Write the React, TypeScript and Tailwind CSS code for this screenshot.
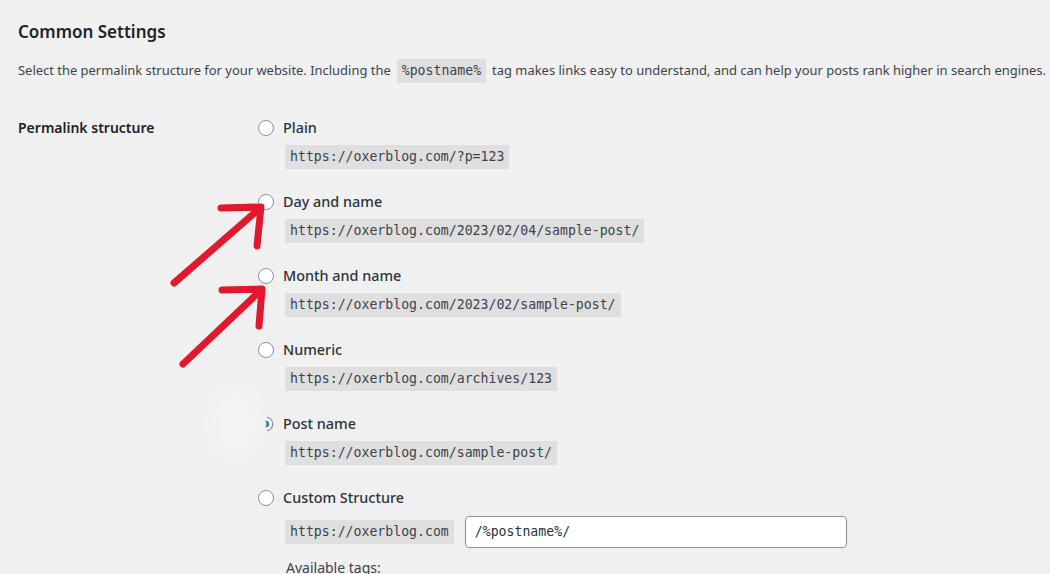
import React from "react";

const sans = "font-['Noto_Sans','Open_Sans',sans-serif]";
const mono = "font-['DejaVu_Sans_Mono','Liberation_Mono',monospace]";

interface OptionProps {
  label: string;
  url: string;
  checked?: boolean;
}

const Radio = () => (
  <span className="block h-4 w-4 shrink-0 rounded-full border border-[#8c8f94] bg-white" />
);

// checked radio, partly rubbed out on its left side
const FadedRadio = () => (
  <svg width="16" height="16" viewBox="0 0 16 16" className="shrink-0">
    <path d="M9 1.2 A6.9 6.9 0 0 1 9 14.8" fill="none" stroke="#8a7f78" strokeWidth="1.1" />
    <path d="M7.5 4.4 A3.6 3.6 0 0 1 7.5 11.6 A5 5 0 0 0 7.5 4.4 Z" fill="#2f6f9f" />
    <path d="M7.4 4.6 Q10.6 8 7.4 11.4 Q8.6 8 7.4 4.6 Z" fill="#3582c4" />
  </svg>
);

const Code = ({ children }: { children: React.ReactNode }) => (
  <code className={`${mono} block h-6 bg-[#dfdfe0] px-[5px] text-[13.2px] leading-6 whitespace-nowrap text-[#3c434a]`}>
    {children}
  </code>
);

const Option = ({ label, url, checked }: OptionProps) => (
  <div className="relative flex flex-col items-start pb-[21px]">
    <label className="flex h-6 items-center gap-[9px]">
      {checked ? <FadedRadio /> : <Radio />}
      <span className="text-[14.4px] font-medium text-[#2c3338]">{label}</span>
    </label>
    <div className="mt-[5px] flex pl-[27px]">
      <Code>{url}</Code>
    </div>
    {checked && (
      <div className="pointer-events-none absolute left-[-46px] top-[-22px] h-[64px] w-[46px] rounded-[20px] bg-[#f6f6f7] opacity-60 blur-[8px]" />
    )}
  </div>
);

export default function App() {
  return (
    <div className={`${sans} relative h-[574px] w-[1050px] overflow-hidden bg-[#f0f0f1] text-[#1d2327]`}>
      <div className="px-[18px] pt-[20px]">
        <h2 className="text-[17px] font-semibold leading-6">Common Settings</h2>
        <div className="mt-[15px] flex h-6 items-center whitespace-nowrap text-[12.95px] text-[#3c434a]">
          <span>Select the permalink structure for your website. Including the</span>
          <span className="mx-[6px] flex">
            <Code>%postname%</Code>
          </span>
          <span>tag makes links easy to understand, and can help your posts rank higher in search engines.</span>
        </div>

        <div className="mt-[33px] flex">
          <div className="h-6 w-[240px] shrink-0 text-[14px] font-semibold leading-6">Permalink structure</div>
          <div className="flex flex-col">
            <Option label="Plain" url="https://oxerblog.com/?p=123" />
            <Option label="Day and name" url="https://oxerblog.com/2023/02/04/sample-post/" />
            <Option label="Month and name" url="https://oxerblog.com/2023/02/sample-post/" />
            <Option label="Numeric" url="https://oxerblog.com/archives/123" />
            <Option label="Post name" url="https://oxerblog.com/sample-post/" checked />
            <div className="flex flex-col items-start">
              <label className="flex h-6 items-center gap-[9px]">
                <Radio />
                <span className="text-[14.4px] font-medium text-[#2c3338]">Custom Structure</span>
              </label>
              <div className="mt-[6px] flex items-center gap-[11px] pl-[27px]">
                <Code>https://oxerblog.com</Code>
                <div
                  className={`${mono} flex h-8 w-[382px] items-center rounded-[4px] border border-[#8c8f94] bg-white px-[9px] text-[13.2px] text-[#2c3338]`}
                >
                  /%postname%/
                </div>
              </div>
              <p className="mt-[8px] pl-[28px] text-[14px] leading-6 text-[#3c434a]">Available tags:</p>
            </div>
          </div>
        </div>
      </div>

      {/* red arrows pointing at the date-based options */}
      <svg className="pointer-events-none absolute left-0 top-0" width="1050" height="574" viewBox="0 0 1050 574">
        <g stroke="#e0192f" strokeWidth="7" strokeLinecap="round" strokeLinejoin="round" fill="none">
          <path d="M174 283 L259 209" />
          <path d="M221 208 L261 207 L257 246" />
          <path d="M183 364 L259 292" />
          <path d="M222 290 L262 289 L259 326" />
        </g>
      </svg>
    </div>
  );
}
